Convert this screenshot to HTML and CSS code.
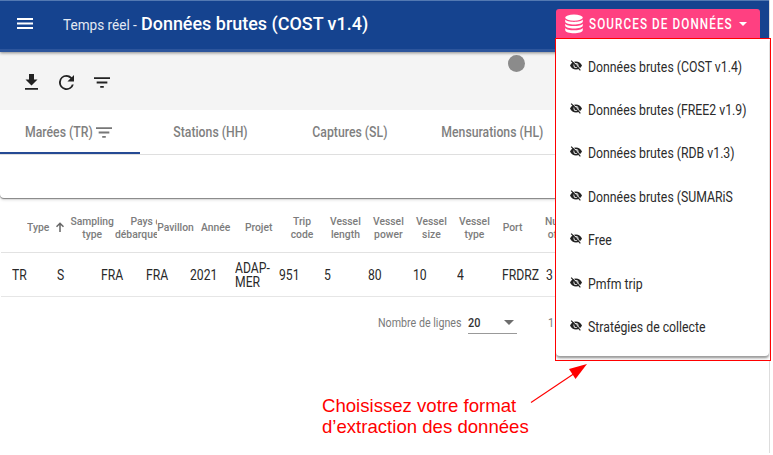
FILE: index.html
```html
<!DOCTYPE html>
<html lang="fr">
<head>
<meta charset="utf-8">
<title>Données brutes (COST v1.4)</title>
<link rel="stylesheet" href="styles.css">
</head>
<body>
<svg class="defs" width="0" height="0">
  <symbol id="filter" viewBox="3 6 18 12"><path d="M3 6h18v2H3zM6 11h12v2H6zM10 16h4v2h-4z"/></symbol>
  <symbol id="eye-off" viewBox="0 0 12 11"><path fill-rule="evenodd" d="M0 5.500C1.300 3 3.400 1.600 6 1.600S10.700 3 12 5.500C10.700 8 8.600 9.400 6 9.400S1.300 8 0 5.500zM6 3a2.500 2.500 0 1 0 0 5 2.500 2.500 0 1 0 0-5zM6 3.800a1.700 1.700 0 1 1 0 3.400 1.700 1.700 0 1 1 0-3.400z"/><path d="M2.200.5l9 9.200" stroke="#fff" stroke-width="1"/><path d="M1.200.7l9.200 9.600" stroke="#222" stroke-width="1.200"/></symbol>
</svg>
<div class="app">
  <header class="topbar">
    <svg class="burger" viewBox="0 0 16 11"><path d="M0 0h16v1.900H0zM0 4.600h16v1.900H0zM0 9.100h16V11H0z"/></svg>
    <h1><span class="t crumb">Temps réel -</span><span class="t title">Données brutes (COST v1.4)</span></h1>
    <button class="sources">
      <svg class="db" viewBox="0 0 18 19"><g fill="#fff"><ellipse cx="9" cy="3.100" rx="8.800" ry="3.100"/><path d="M.2 5c1.800 3.200 15.800 3.200 17.600 0v1.900c0 4-17.600 4-17.600 0z"/><path d="M.2 9.200c1.800 3.200 15.800 3.200 17.600 0v1.900c0 4-17.600 4-17.600 0z"/><path d="M.2 13.400c1.800 3.200 15.800 3.200 17.600 0v2.200c0 4.300-17.600 4.300-17.600 0z"/></g></svg>
      <span class="t">SOURCES DE DONNÉES</span>
      <svg class="caret" viewBox="0 0 8 4"><path d="M0 0h8L4 4z" fill="#fff"/></svg>
    </button>
  </header>
  <div class="toolbar">
    <svg class="download" viewBox="0 0 13 16"><path d="M4 0h5v5.500h3.500l-6 6-6-6H4zM0 14h13v1.700H0z"/></svg>
    <svg class="refresh" viewBox="4 4 16 16"><path d="M17.650 6.350A7.960 7.960 0 0 0 12 4a8 8 0 1 0 7.730 10h-2.080A6 6 0 1 1 12 6c1.660 0 3.140.69 4.220 1.780L13 11h7V4z"/></svg>
    <svg class="filter"><use href="#filter"/></svg>
    <i class="dot"></i>
  </div>
  <nav class="tabs">
    <a class="active"><span class="t">Marées (TR)</span><svg><use href="#filter"/></svg></a>
    <a><span class="t">Stations (HH)</span></a>
    <a><span class="t">Captures (SL)</span></a>
    <a class="wide"><span class="t">Mensurations (HL)</span></a>
  </nav>
  <div class="panel"></div>
  <div class="row head">
    <div class="type"><span class="t">Type</span><svg viewBox="0 0 8 10"><path d="M4 10V1M.5 4.700L4 1.200l3.500 3.500" fill="none" stroke="#666" stroke-width="1.500"/></svg></div>
    <div><span class="t">Sampling<br>type</span></div>
    <div class="clip"><span class="t">Pays de<br>débarquement</span></div>
    <div class="pav"><span class="t">Pavillon</span></div>
    <div><span class="t">Année</span></div>
    <div><span class="t">Projet</span></div>
    <div><span class="t">Trip<br>code</span></div>
    <div><span class="t">Vessel<br>length</span></div>
    <div><span class="t">Vessel<br>power</span></div>
    <div><span class="t">Vessel<br>size</span></div>
    <div><span class="t">Vessel<br>type</span></div>
    <div class="port"><span class="t">Port</span></div>
    <div class="sets"><span class="t">Number<br>of sets</span></div>
  </div>
  <div class="row data">
    <div><span class="t">TR</span></div><div><span class="t">S</span></div><div><span class="t">FRA</span></div><div><span class="t">FRA</span></div><div><span class="t">2021</span></div><div><span class="t">ADAP-<br>MER</span></div><div><span class="t">951</span></div><div><span class="t">5</span></div><div><span class="t">80</span></div><div><span class="t">10</span></div><div><span class="t">4</span></div><div><span class="t">FRDRZ</span></div><div><span class="t">3</span></div>
  </div>
  <footer class="pager">
    <span class="label"><span class="t">Nombre de lignes</span></span>
    <span class="select"><span class="t">20</span><svg viewBox="0 0 10 5"><path d="M0 0h10L5 5z" fill="#6d6d6d"/></svg></span>
    <span class="t range">1</span>
  </footer>
</div>
<div class="frame">
  <ul class="menu">
    <li><svg><use href="#eye-off"/></svg><span class="t">Données brutes (COST v1.4)</span></li>
    <li><svg><use href="#eye-off"/></svg><span class="t">Données brutes (FREE2 v1.9)</span></li>
    <li><svg><use href="#eye-off"/></svg><span class="t">Données brutes (RDB v1.3)</span></li>
    <li><svg><use href="#eye-off"/></svg><span class="t">Données brutes (SUMARiS</span></li>
    <li><svg><use href="#eye-off"/></svg><span class="t">Free</span></li>
    <li><svg><use href="#eye-off"/></svg><span class="t">Pmfm trip</span></li>
    <li><svg><use href="#eye-off"/></svg><span class="t">Stratégies de collecte</span></li>
  </ul>
</div>
<p class="note">Choisissez votre format<br>d’extraction des données</p>
<svg class="arrow" viewBox="0 0 60 42"><path d="M1 39.500L45 10" stroke="#f00" stroke-width="1.100"/><path d="M57 1L39 6l6.500 10z" fill="#f00"/></svg>
</body>
</html>
```
FILE: styles.css
```css
* { box-sizing: border-box; }
body { margin: 0; height: 455px; overflow: hidden; position: relative; background: #fff; font-family: Roboto, sans-serif; }
.defs { position: absolute; }
svg { display: block; flex: none; }
.t { display: inline-block; transform: scaleX(.91); transform-origin: left center; white-space: nowrap; flex: none; }
.app { width: 770px; height: 453px; border-right: 1px solid #ddd; overflow: hidden; }

.topbar { height: 52px; background: #15438f; border-top: 1px solid #5379b2; border-bottom: 3px solid #2c559c; display: flex; position: relative; box-shadow: 0 1px 3px rgba(0,0,0,.45); }
.burger { width: 16px; height: 11px; margin: 17px 0 0 17px; fill: #fff; }
h1 { margin: 0 0 0 30px; width: 493px; display: flex; align-items: baseline; color: #fff; font-weight: 400; line-height: 46px; }
.crumb { font-size: 14px; width: 78px; color: #e3e9f3; transform: scaleX(.97); }
.title { font-size: 18.5px; font-weight: 500; transform: scaleX(.97); }
.sources { font: 500 14px/28px Roboto, sans-serif; border: 0; padding: 0 0 0 9px; margin-top: 8px; width: 204px; height: 29px; border-radius: 3px 3px 0 0; background: #ff4081; color: #fff; letter-spacing: 1.3px; display: flex; align-items: center; }
.db { width: 18px; height: 20px; margin-right: 6px; }
.sources .t { width: 150px; transform: scaleX(.836); }
.caret { width: 8px; height: 4px; }

.toolbar { height: 58px; background: #f4f4f4; display: flex; align-items: center; padding: 2px 0 0 25px; }
.toolbar svg { fill: #222; }
.download { width: 13px; height: 16px; }
.refresh { width: 15px; height: 15px; margin-left: 21px; }
.filter { width: 16px; height: 11px; margin-left: 20px; }
.dot { width: 17px; height: 17px; border-radius: 50%; background: #8b8b8b; margin: -38px 0 0 398px; }

.tabs { height: 45px; border-bottom: 1px solid #e0e0e0; display: flex; font-size: 14px; font-weight: 500; color: #7f7f7f; }
.tabs a { width: 140px; height: 44px; display: flex; align-items: center; justify-content: center; }
.tabs .t { transform: scaleX(.875); transform-origin: center; }
.tabs .wide { width: 145px; }
.tabs .active { border-bottom: 2px solid #254a94; padding-top: 2px; justify-content: flex-start; padding-left: 25px; }
.tabs .active .t { transform-origin: left; width: 71px; }
.tabs svg { width: 16px; height: 11px; fill: #777; }

.panel { height: 43px; border-radius: 0 0 4px 4px; box-shadow: 0 1px 1px rgba(0,0,0,.42), 0 2px 3px rgba(0,0,0,.14); }

.row { display: flex; align-items: center; margin-left: 1px; }
.head { height: 55px; padding: 5px 0 0 26px; border-bottom: 1px solid #e2e2e2; font-size: 11px; line-height: 13px; font-weight: 500; color: #7c7c7c; text-align: center; }
.head > div { width: 43.2px; flex: none; display: flex; justify-content: center; }
.head .t { transform: scaleX(.94); transform-origin: center; }
.head .type { width: 43.500px; justify-content: flex-start; }
.type .t { width: 29px; transform-origin: left; text-align: left; }
.type svg { width: 8px; height: 10px; margin-top: 1px; }
.head .clip { overflow: hidden; justify-content: flex-start; padding-left: 1px; }
.head .clip .t { transform-origin: left; }
.head .pav { width: 37px; }
.head .port { width: 33px; }
.head .sets { justify-content: flex-start; padding-left: 16px; }
.head .sets .t { transform-origin: left; }
.data { height: 44px; padding-left: 11px; border-bottom: 1px solid #e6e6e6; font-size: 14px; line-height: 14px; color: #292929; }
.data .t { transform: scaleX(.87); }
.data > div { width: 44.5px; flex: none; }

.pager { height: 52px; display: flex; align-items: center; font-size: 12px; color: #7a7a7a; padding-left: 378px; }
.label { width: 90px; }
.label .t { transform: scaleX(.89); }
.select { width: 49px; height: 21px; border-bottom: 1px solid #999; display: flex; align-items: center; justify-content: space-between; padding-right: 3px; color: #333; font-weight: 500; }
.select svg { width: 10px; height: 5px; }
.range { margin-left: 31px; }

.frame { position: absolute; left: 555px; top: 38px; width: 216px; height: 323px; border: 1px solid #f00; overflow: hidden; background: #fff; }
.menu { list-style: none; margin: 0; padding: 6px 0 0; width: 213px; height: 317px; border-radius: 0 0 4px 4px; box-shadow: 0 2px 2px rgba(0,0,0,.3), 0 3px 3px rgba(0,0,0,.12); font-size: 14px; color: #2b2b2b; }
.menu .t { transform: scaleX(.877); }
.menu li { height: 43.4px; display: flex; align-items: center; padding-left: 14px; }
.menu svg { width: 12px; height: 11px; margin: -3px 6px 0 0; fill: #222; }
.note { position: absolute; left: 322px; top: 395px; margin: 0; font: 18.600px/21px "Liberation Sans", sans-serif; color: #f00; white-space: nowrap; }
.arrow { position: absolute; left: 530px; top: 363px; width: 60px; height: 42px; }
```
